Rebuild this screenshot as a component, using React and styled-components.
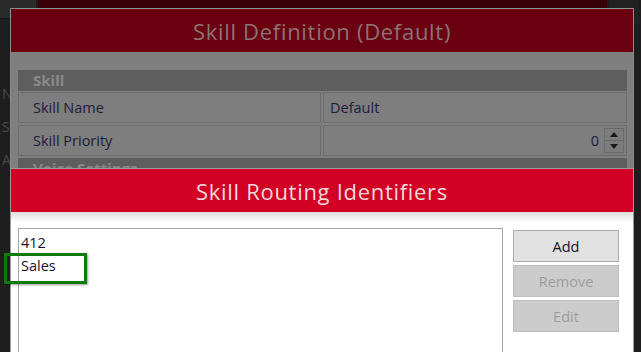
import React from "react";
import styled, { createGlobalStyle } from "styled-components";

const GlobalStyle = createGlobalStyle`
  html, body {
    margin: 0;
    padding: 0;
    background: #1c1c1c;
  }
  body {
    font-family: "Open Sans", "DejaVu Sans", sans-serif;
  }
`;

const Screen = styled.div`
  position: relative;
  width: 641px;
  height: 352px;
  overflow: hidden;
  background: #1e1e1e;
`;

const TopBand = styled.div`
  display: flex;
  height: 24px;
`;

const BandCell = styled.div`
  width: ${(p) => p.width || "auto"};
  flex: ${(p) => (p.grow ? 1 : "none")};
  background: ${(p) => p.bg};
  border-bottom: ${(p) => (p.line ? "1px solid #151515" : "none")};
  height: ${(p) => (p.line ? "18px" : "24px")};
  margin-right: 2px;
`;

const SideList = styled.div`
  display: flex;
  flex-direction: column;
  padding-top: 60px;
  padding-left: 2px;
  gap: 14px;
  color: #4a4a4a;
  font-size: 14px;
`;

const BackWindow = styled.div`
  position: absolute;
  left: 10px;
  top: 8px;
  width: 622px;
  height: 200px;
  background: #7f7f7f;
  border: 1px solid #8c8c8c;
`;

const Title = styled.div`
  height: 43px;
  background: ${(p) => p.bg};
  display: flex;
  align-items: center;
  justify-content: center;
  color: ${(p) => p.color};
  font-size: 22px;
  letter-spacing: 0.7px;
`;

const BackBody = styled.div`
  padding: 18px 6px 0 7px;
  display: flex;
  flex-direction: column;
`;

const Section = styled.div`
  height: 21px;
  background: #5e5e5e;
  color: #8a8a8a;
  font-weight: 700;
  font-size: 15px;
  line-height: 21px;
  padding-left: 15px;
  margin-bottom: 1px;
`;

const Row = styled.div`
  display: flex;
  height: 31px;
  margin-bottom: 2px;
`;

const Cell = styled.div`
  flex: ${(p) => (p.value ? "1" : "none")};
  width: ${(p) => (p.value ? "auto" : "303px")};
  margin-left: ${(p) => (p.value ? "2px" : "0")};
  border: 1px solid #6c6c6c;
  background: #7e7e7e;
  display: flex;
  align-items: center;
  justify-content: ${(p) => (p.right ? "flex-end" : "flex-start")};
  padding: 0 ${(p) => (p.right ? "2px" : "8px")} 0 ${(p) => (p.value ? "6px" : "14px")};
  color: #1d1d3a;
  font-size: 14.5px;
  box-sizing: border-box;
`;

const Spinner = styled.div`
  display: flex;
  flex-direction: column;
  margin-left: 5px;
  width: 20px;
  height: 25px;
  border: 1px solid #6a6a6a;
  box-sizing: border-box;
`;

const SpinPart = styled.div`
  flex: 1;
  display: flex;
  align-items: center;
  justify-content: center;
  background: #7c7c7c;
  border-top: ${(p) => (p.down ? "1px solid #6a6a6a" : "none")};
`;

const FrontWindow = styled.div`
  position: absolute;
  left: 10px;
  top: 168px;
  width: 622px;
  height: 200px;
  background: #ffffff;
  border: 1px solid #9a9a9a;
`;

const Shade = styled.div`
  height: 10px;
  background: linear-gradient(#dcdcdc, #ffffff);
`;

const Content = styled.div`
  display: flex;
  gap: 10px;
  padding: 6px 14px 0 7px;
`;

const ListBox = styled.div`
  width: 485px;
  height: 140px;
  border: 1px solid #a6a6a6;
  box-sizing: border-box;
  padding-top: 2px;
`;

const Item = styled.div`
  height: 23px;
  line-height: 23px;
  padding-left: 2px;
  font-size: 14.5px;
  color: #14142c;
`;

const Buttons = styled.div`
  display: flex;
  flex-direction: column;
  gap: 3px;
  padding-top: 2px;
`;

const Button = styled.button`
  width: 106px;
  height: 32px;
  font-family: inherit;
  font-size: 14.5px;
  border: 1px solid ${(p) => (p.disabled ? "#bebebe" : "#adadad")};
  background: ${(p) => (p.disabled ? "#cccccc" : "#e1e1e1")};
  color: ${(p) => (p.disabled ? "#9c9c9c" : "#14142c")};
  padding: 0;
`;

const Highlight = styled.div`
  position: absolute;
  left: 4px;
  top: 253px;
  width: 77px;
  height: 25px;
  border: 3px solid #0c7a0c;
  box-shadow: 1px 1px 2px rgba(0, 0, 0, 0.4);
`;

export default function App() {
  return (
    <>
      <GlobalStyle />
      <Screen>
        <TopBand>
          <BandCell width="36px" bg="#2b2b2b" line />
          <BandCell grow bg="#3a0008" />
          <BandCell width="30px" bg="#222222" />
        </TopBand>
        <SideList>
          <span>N</span>
          <span>S</span>
          <span>A</span>
        </SideList>

        <BackWindow>
          <Title bg="#6b0010" color="#8b7377">Skill Definition (Default)</Title>
          <BackBody>
            <Section>Skill</Section>
            <Row>
              <Cell>Skill Name</Cell>
              <Cell value>Default</Cell>
            </Row>
            <Row>
              <Cell>Skill Priority</Cell>
              <Cell value right>
                0
                <Spinner>
                  <SpinPart>
                    <svg width="8" height="5" viewBox="0 0 8 5">
                      <path d="M0 5 L4 0 L8 5 Z" fill="#1a1a1a" />
                    </svg>
                  </SpinPart>
                  <SpinPart down>
                    <svg width="8" height="5" viewBox="0 0 8 5">
                      <path d="M0 0 L4 5 L8 0 Z" fill="#1a1a1a" />
                    </svg>
                  </SpinPart>
                </Spinner>
              </Cell>
            </Row>
            <Section>Voice Settings</Section>
          </BackBody>
        </BackWindow>

        <FrontWindow>
          <Title bg="#d10024" color="#f3d9dd">Skill Routing Identifiers</Title>
          <Shade />
          <Content>
            <ListBox>
              <Item>412</Item>
              <Item>Sales</Item>
            </ListBox>
            <Buttons>
              <Button>Add</Button>
              <Button disabled>Remove</Button>
              <Button disabled>Edit</Button>
            </Buttons>
          </Content>
        </FrontWindow>

        <Highlight />
      </Screen>
    </>
  );
}
